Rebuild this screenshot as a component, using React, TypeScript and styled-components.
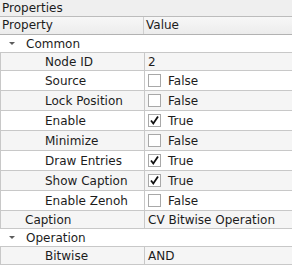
import React, { ReactElement } from "react";
import styled, { createGlobalStyle, css } from "styled-components";

type Entry =
  | { kind: "group"; label: string }
  | { kind: "text"; label: string; value: string; depth: number }
  | { kind: "bool"; label: string; value: boolean; depth: number };

const entries: Entry[] = [
  { kind: "group", label: "Common" },
  { kind: "text", label: "Node ID", value: "2", depth: 1 },
  { kind: "bool", label: "Source", value: false, depth: 1 },
  { kind: "bool", label: "Lock Position", value: false, depth: 1 },
  { kind: "bool", label: "Enable", value: true, depth: 1 },
  { kind: "bool", label: "Minimize", value: false, depth: 1 },
  { kind: "bool", label: "Draw Entries", value: true, depth: 1 },
  { kind: "bool", label: "Show Caption", value: true, depth: 1 },
  { kind: "bool", label: "Enable Zenoh", value: false, depth: 1 },
  { kind: "text", label: "Caption", value: "CV Bitwise Operation", depth: 0 },
  { kind: "group", label: "Operation" },
  { kind: "text", label: "Bitwise", value: "AND", depth: 1 },
];

const GlobalStyle = createGlobalStyle`
  html, body {
    margin: 0;
    padding: 0;
    background: #ffffff;
  }
  body {
    font-family: "DejaVu Sans", "Liberation Sans", sans-serif;
    font-size: 12px;
    color: #1c1c1c;
  }
`;

function Check({ checked }: { checked: boolean }): ReactElement {
  return (
    <CheckBox>
      {checked && (
        <svg width="11" height="11" viewBox="0 0 11 11">
          <path
            d="M2 5.5 L4.3 8.5 L9 1.5"
            fill="none"
            stroke="#111"
            strokeWidth="1.8"
          />
        </svg>
      )}
    </CheckBox>
  );
}

function App(): ReactElement {
  return (
    <>
      <GlobalStyle />
      <Panel>
        <TitleBar>Properties</TitleBar>
        <Header>
          <HeaderCell>Property</HeaderCell>
          <HeaderCell>Value</HeaderCell>
        </Header>
        {entries.map((entry, index) => {
          const alt = index % 2 === 1;
          if (entry.kind === "group") {
            return (
              <GroupRow key={entry.label} alt={alt}>
                <Arrow />
                <span>{entry.label}</span>
              </GroupRow>
            );
          }
          return (
            <Row key={entry.label} alt={alt} tall={entry.kind === "bool"}>
              <NameCell depth={entry.depth}>{entry.label}</NameCell>
              <ValueCell>
                {entry.kind === "bool" ? (
                  <>
                    <Check checked={entry.value} />
                    <span>{entry.value ? "True" : "False"}</span>
                  </>
                ) : (
                  entry.value
                )}
              </ValueCell>
            </Row>
          );
        })}
      </Panel>
    </>
  );
}

const Panel = styled.div`
  width: 292px;
  height: 269px;
  display: flex;
  flex-direction: column;
  background: #ffffff;
  overflow: hidden;
`;

const TitleBar = styled.div`
  height: 16px;
  line-height: 16px;
  padding-left: 2px;
  background: #efefef;
  border-bottom: 1px solid #bcbcbc;
`;

const Header = styled.div`
  display: grid;
  grid-template-columns: 144px 1fr;
  height: 17px;
  background: linear-gradient(#f7f7f7, #ececec);
  border-bottom: 1px solid #b2b2b2;
`;

const HeaderCell = styled.div`
  line-height: 17px;
  padding-left: 2px;
  border-right: 1px solid #cfcfcf;

  &:last-child {
    border-right: none;
  }
`;

const rowBase = css<{ alt: boolean }>`
  background: ${({ alt }) => (alt ? "#f5f5f5" : "#ffffff")};
  border-bottom: 1px solid #c8c8c8;
  box-sizing: border-box;
`;

const GroupRow = styled.div<{ alt: boolean }>`
  ${rowBase}
  display: flex;
  align-items: center;
  height: 18px;
  padding-left: 9px;
  gap: 11px;
`;

const Arrow = styled.span`
  width: 0;
  height: 0;
  border-left: 3px solid transparent;
  border-right: 3px solid transparent;
  border-top: 3px solid #5c5c5c;
`;

const Row = styled.div<{ alt: boolean; tall: boolean }>`
  ${rowBase}
  display: grid;
  grid-template-columns: 144px 1fr;
  height: ${({ tall }) => (tall ? "20px" : "18px")};
  border-left: 1px solid #c8c8c8;
`;

const NameCell = styled.div<{ depth: number }>`
  display: flex;
  align-items: center;
  padding-left: ${({ depth }) => (depth === 0 ? 24 : 44)}px;
  border-right: 1px solid #c8c8c8;
  white-space: nowrap;
`;

const ValueCell = styled.div`
  display: flex;
  align-items: center;
  gap: 7px;
  padding-left: 3px;
  white-space: nowrap;
`;

const CheckBox = styled.span`
  box-sizing: border-box;
  width: 13px;
  height: 13px;
  border: 1px solid #a8a8a8;
  background: #ffffff;
  display: flex;
  align-items: center;
  justify-content: center;
`;

export default App;
